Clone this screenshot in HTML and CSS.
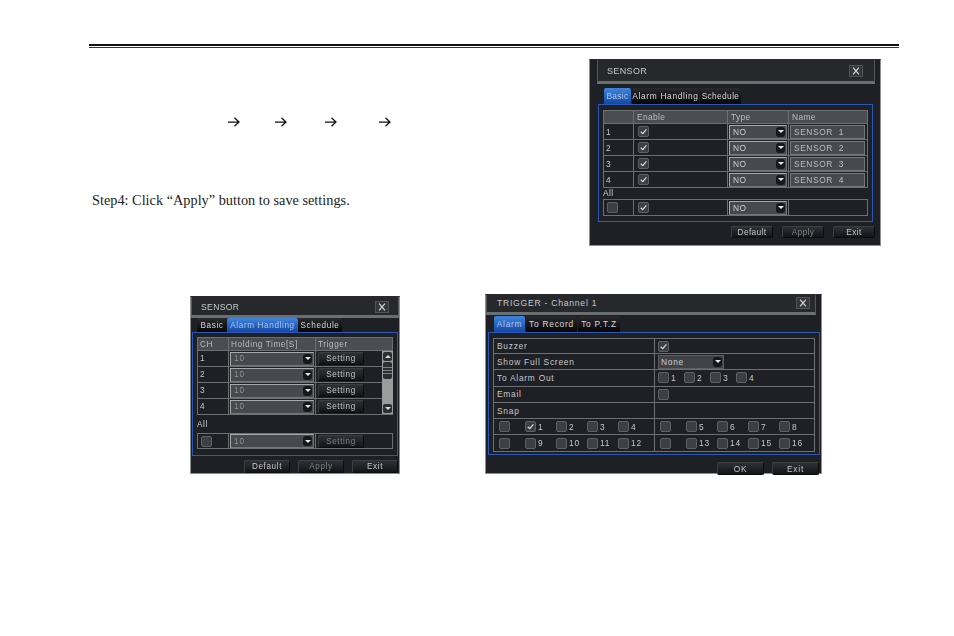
FILE: index.html
```html
<!DOCTYPE html>
<html lang="en">
<head>
<meta charset="utf-8">
<title>Sensor setup</title>
<link rel="stylesheet" href="styles.css">
</head>
<body>
<svg class="defs" width="0" height="0" aria-hidden="true">
  <symbol id="tick" viewBox="0 0 10 10"><path d="M2 5.2 4.2 7.4 8.2 2.6" fill="none" stroke="#d6d8d8" stroke-width="1.4"/></symbol>
  <symbol id="cross" viewBox="0 0 14 12"><path d="M3.5 2 10.5 10M10.5 2 3.5 10" fill="none" stroke="#d0d0d0" stroke-width="1.6"/></symbol>
  <symbol id="arrow" viewBox="0 0 12 10"><path d="M0 5H11M6.5 .8 11 5 6.5 9.2" fill="none" stroke="#111" stroke-width="1.25"/></symbol>
</svg>
<main class="page">
  <div class="rule"></div>
  <div class="top">
    <div class="copy">
      <div class="arrows">
        <svg class="arrow"><use href="#arrow"/></svg>
        <svg class="arrow"><use href="#arrow"/></svg>
        <svg class="arrow"><use href="#arrow"/></svg>
        <svg class="arrow"><use href="#arrow"/></svg>
      </div>
      <p class="step">Step4: Click “Apply” button to save settings.</p>
    </div>

    <section class="win win-a">
      <header class="title"><span>SENSOR</span><span class="close"><svg><use href="#cross"/></svg></span></header>
      <nav class="tabs"><span class="tab on">Basic</span><span class="tab">Alarm Handling</span><span class="tab">Schedule</span></nav>
      <div class="panel">
        <div class="row head"><span>&nbsp;</span><span>Enable</span><span>Type</span><span>Name</span></div>
        <div class="row"><span>1</span><span><i class="cb"><svg><use href="#tick"/></svg></i></span><span><b class="sel">NO<em></em></b></span><span><b class="inp">SENSOR&nbsp; 1</b></span></div>
        <div class="row"><span>2</span><span><i class="cb"><svg><use href="#tick"/></svg></i></span><span><b class="sel">NO<em></em></b></span><span><b class="inp">SENSOR&nbsp; 2</b></span></div>
        <div class="row"><span>3</span><span><i class="cb"><svg><use href="#tick"/></svg></i></span><span><b class="sel">NO<em></em></b></span><span><b class="inp">SENSOR&nbsp; 3</b></span></div>
        <div class="row"><span>4</span><span><i class="cb"><svg><use href="#tick"/></svg></i></span><span><b class="sel">NO<em></em></b></span><span><b class="inp">SENSOR&nbsp; 4</b></span></div>
        <div class="all-label">All</div>
        <div class="row all"><span><i class="cb"></i></span><span><i class="cb"><svg><use href="#tick"/></svg></i></span><span><b class="sel">NO<em></em></b></span><span></span></div>
      </div>
      <footer class="actions"><span class="btn">Default</span><span class="btn dim">Apply</span><span class="btn">Exit</span></footer>
    </section>
  </div>

  <div class="bottom">
    <section class="win win-b">
      <header class="title"><span>SENSOR</span><span class="close"><svg><use href="#cross"/></svg></span></header>
      <nav class="tabs"><span class="tab">Basic</span><span class="tab on">Alarm Handling</span><span class="tab">Schedule</span></nav>
      <div class="panel">
        <div class="scrollwrap">
          <div class="row head"><span>CH</span><span>Holding Time[S]</span><span>Trigger</span></div>
          <div class="row"><span>1</span><span><b class="sel mute">10<em></em></b></span><span><span class="btn">Setting</span></span></div>
          <div class="row"><span>2</span><span><b class="sel mute">10<em></em></b></span><span><span class="btn">Setting</span></span></div>
          <div class="row"><span>3</span><span><b class="sel mute">10<em></em></b></span><span><span class="btn">Setting</span></span></div>
          <div class="row"><span>4</span><span><b class="sel mute">10<em></em></b></span><span><span class="btn">Setting</span></span></div>
          <div class="scrollbar"><i class="sb-btn up"></i><i class="sb-thumb"></i><i class="sb-fill"></i><i class="sb-btn down"></i></div>
        </div>
        <div class="all-label">All</div>
        <div class="row all"><span><i class="cb"></i></span><span><b class="sel mute">10<em></em></b></span><span><span class="btn dim">Setting</span></span></div>
      </div>
      <footer class="actions"><span class="btn">Default</span><span class="btn dim">Apply</span><span class="btn">Exit</span></footer>
    </section>

    <section class="win win-c">
      <header class="title"><span>TRIGGER - Channel 1</span><span class="close"><svg><use href="#cross"/></svg></span></header>
      <nav class="tabs"><span class="tab on">Alarm</span><span class="tab">To Record</span><span class="tab">To P.T.Z</span></nav>
      <div class="panel">
        <div class="row"><span>Buzzer</span><span><i class="cb"><svg><use href="#tick"/></svg></i></span></div>
        <div class="row"><span>Show Full Screen</span><span><b class="sel none">None<em></em></b></span></div>
        <div class="row"><span>To Alarm Out</span><span class="outs"><label><i class="cb"></i>1</label><label><i class="cb"></i>2</label><label><i class="cb"></i>3</label><label><i class="cb"></i>4</label></span></div>
        <div class="row"><span>Email</span><span><i class="cb"></i></span></div>
        <div class="row"><span>Snap</span><span></span></div>
        <div class="row"><span class="snap"><label><i class="cb"></i></label><label><i class="cb"><svg><use href="#tick"/></svg></i>1</label><label><i class="cb"></i>2</label><label><i class="cb"></i>3</label><label><i class="cb"></i>4</label></span><span class="snap"><label><i class="cb"></i></label><label><i class="cb"></i>5</label><label><i class="cb"></i>6</label><label><i class="cb"></i>7</label><label><i class="cb"></i>8</label></span></div>
        <div class="row"><span class="snap"><label><i class="cb"></i></label><label><i class="cb"></i>9</label><label><i class="cb"></i>10</label><label><i class="cb"></i>11</label><label><i class="cb"></i>12</label></span><span class="snap"><label><i class="cb"></i></label><label><i class="cb"></i>13</label><label><i class="cb"></i>14</label><label><i class="cb"></i>15</label><label><i class="cb"></i>16</label></span></div>
      </div>
      <footer class="actions"><span class="btn">OK</span><span class="btn">Exit</span></footer>
    </section>
  </div>
</main>
</body>
</html>
```
FILE: styles.css
```css
* { box-sizing: border-box; }
html, body { margin: 0; background: #fff; }
.defs { display: block; height: 0; }
.page { width: 954px; height: 636px; overflow: hidden; padding-top: 44px; }
.rule { height: 4px; margin: 0 55px 0 89px; border-top: 2px solid #111; border-bottom: 1px solid #333; }

.top { display: flex; height: 246px; padding-top: 11px; }
.copy { width: 589px; padding-left: 92px; }
.arrows { display: flex; padding: 58px 0 0 136px; }
.arrow { width: 12px; height: 10px; display: block; }
.arrow:nth-child(2) { margin-left: 35px; }
.arrow:nth-child(3) { margin-left: 38px; }
.arrow:nth-child(4) { margin-left: 42px; }
.step { margin: 65px 0 0; font: 14.3px/16px "Liberation Serif", serif; color: #222; white-space: nowrap; }

.bottom { display: flex; align-items: flex-start; padding-left: 190px; }

/* Dialog shell */
.win { display: flex; flex-direction: column; background: #1f1f26; border: 1px solid #8b8f8e; border-top-color: #2a2a2e;
  font-family: "Liberation Sans", sans-serif; color: #c6c8c8; filter: blur(.45px); }
.title { display: flex; justify-content: space-between; align-items: center; background: #27282c;
  border: 1px solid #55585a; border-top: 0; border-bottom: 3px solid #6a6f72; flex: none; }
.close { display: flex; align-items: center; justify-content: center; background: #35363a; border: 1px solid #505255; }
.close svg { width: 100%; height: 100%; display: block; }
.tabs { display: flex; align-items: flex-end; gap: 1px; flex: none; }
.tab { display: flex; align-items: center; justify-content: center; background: linear-gradient(#2a2a2e, #060608);
  border-radius: 2px 2px 0 0; color: #d8d8d8; white-space: nowrap; }
.tab.on { background: linear-gradient(#3f86dd, #1446a6); color: #a9c6e6; }
.panel { border: 1px solid #2a58b4; flex: none; }
.row { display: grid; border: 1px solid #6c7072; border-top: 0; background: #1f1f26; }
.row > span { display: flex; align-items: center; border-left: 1px solid #6c7072; min-width: 0; }
.row > span:first-child { border-left: 0; }
.head { background: #4a4e53; border-top: 1px solid #6c7072; color: #bcbebe; }
.all-label { color: #d0d0d0; }
.all { border-top: 1px solid #6c7072; }

/* Controls */
.cb { display: flex; flex: none; align-items: center; justify-content: center; background: #3c3f44; border: 1px solid #5e6164; border-radius: 2px; }
.cb svg { width: 100%; height: 100%; display: block; }
.sel { display: flex; align-items: center; justify-content: space-between; font-weight: 400; background: #464a4f;
  border: 1px solid #72767a; border-top-color: #a8aaaa; border-left-color: #a8aaaa; color: #ccced0; }
.sel em { display: flex; align-items: center; justify-content: center; align-self: stretch; background: #16181b; border-radius: 3px; margin: 1px; }
.sel em::after { content: ""; border: 3px solid transparent; border-top: 3px solid #e8e8e8; border-bottom: 0; }
.sel.mute { color: #8f9396; }
.inp { display: flex; align-items: center; font-weight: 400; background: #464a4f; border: 1px solid #74787c; color: #bcbfc0; }
.btn { display: flex; align-items: center; justify-content: center; background: linear-gradient(#303136, #131418);
  border: 1px solid #3c3d40; border-right-color: #0c0c0e; border-bottom-color: #0c0c0e; border-radius: 2px; color: #c4c5c5; }
.btn.dim { color: #7d7f82; }
.actions { display: flex; justify-content: flex-end; flex: none; }

/* Window A: Basic */
.win-a { width: 292px; height: 187px; font-size: 8.4px; letter-spacing: .35px; }
.win-a .title { height: 24px; margin: 0 5px 0 7px; padding: 0 11px 0 9px; font-size: 9px; }
.win-a .close { width: 14px; height: 12px; }
.win-a .tabs { height: 20px; padding-left: 14px; }
.win-a .tab { height: 16px; width: 27px; }
.win-a .tab + .tab { width: 67px; letter-spacing: .65px; }
.win-a .tab:last-child { width: 41px; letter-spacing: .35px; }
.win-a .panel { height: 118px; margin: 0 7px 0 8px; padding: 5px 4px 0; }
.win-a .row { grid-template-columns: 29px 94px 61px 1fr; height: 16px; }
.win-a .head { height: 14px; }
.win-a .row > span:first-child { padding-left: 2px; }
.win-a .row > span:nth-child(2) { padding-left: 4px; }
.win-a .row > span:nth-child(n+3) { padding: 0 1px; }
.win-a .head > span:nth-child(n+2) { padding-left: 3px; }
.win-a .cb { width: 11px; height: 11px; }
.win-a .sel { flex: 1; height: 14px; padding: 0 0 0 3px; }
.win-a .sel em { width: 9px; }
.win-a .inp { flex: 1; height: 14px; padding-left: 3px; margin-right: 1px; letter-spacing: .6px; }
.win-a .all-label { height: 11px; line-height: 10px; }
.win-a .all { height: 17px; }
.win-a .all > span:first-child .cb { margin-left: 1px; }
.win-a .actions { gap: 9px; padding: 4px 5px 0 0; }
.win-a .btn { width: 42px; height: 12px; }

/* Window B: Alarm Handling */
.win-b { width: 210px; height: 178px; margin-top: 2px; font-size: 8.2px; letter-spacing: .6px; }
.win-b .title { height: 21px; padding: 2px 9px 0 9px; font-size: 8.6px; letter-spacing: .35px; }
.win-b .close { width: 14px; height: 12px; }
.win-b .tabs { height: 14px; padding-left: 6px; gap: 0; }
.win-b .tab { height: 14px; width: 30px; }
.win-b .tab + .tab { width: 71px; }
.win-b .tab:last-child { width: 44px; }
.win-b .panel { height: 124px; margin: 0 1px; padding: 4px 4px 0; }
.win-b .scrollwrap { display: grid; grid-template-columns: 1fr 11px; grid-template-rows: 14px repeat(4, 16px); }
.win-b .row { grid-column: 1 / -1; grid-template-columns: 30px 87px 1fr; }
.win-b .scrollwrap .row:nth-child(1) { grid-row: 1; }
.win-b .scrollwrap .row:nth-child(2) { grid-row: 2; }
.win-b .scrollwrap .row:nth-child(3) { grid-row: 3; }
.win-b .scrollwrap .row:nth-child(4) { grid-row: 4; }
.win-b .scrollwrap .row:nth-child(5) { grid-row: 5; }
.win-b .row > span:first-child { padding-left: 2px; }
.win-b .row > span:nth-child(2) { padding: 0 1px; }
.win-b .row > span:nth-child(3) { padding-left: 2px; }
.win-b .head > span:nth-child(n+2) { padding-left: 2px; }
.win-b .sel { flex: 1; height: 14px; padding-left: 3px; letter-spacing: 1px; }
.win-b .sel em { width: 9px; }
.win-b .row .btn { width: 46px; height: 13px; }
.win-b .scrollbar { grid-column: 2; grid-row: 2 / 6; z-index: 1; display: flex; flex-direction: column; background: #9a9d9c; height: 63px; padding: 1px; }
.sb-btn { display: flex; flex: none; align-items: center; justify-content: center; height: 9px; background: #2c2e31; border-radius: 2px; }
.sb-btn.up::after { content: ""; border: 3px solid transparent; border-bottom-color: #ddd; border-top: 0; }
.sb-btn.down::after { content: ""; border: 3px solid transparent; border-top-color: #ddd; border-bottom: 0; }
.sb-thumb { flex: none; height: 17px; margin-top: 1px; background: linear-gradient(#2c2e31 0 5px, #7f8284 5px 6px, #2c2e31 6px 8px, #7f8284 8px 9px, #2c2e31 9px 11px, #7f8284 11px 12px, #2c2e31 12px); border-radius: 2px; }
.sb-fill { flex: 1; }
.win-b .all-label { height: 18px; line-height: 20px; }
.win-b .all { height: 16px; }
.win-b .all .cb { width: 11px; height: 11px; margin-left: 1px; }
.win-b .actions { gap: 8px; padding: 4px 1px 0 0; }
.win-b .actions .btn { width: 46px; height: 13px; }

/* Window C: Trigger */
.win-c { width: 337px; height: 180px; margin-left: 85px; font-size: 8.4px; letter-spacing: .75px; }
.win-c .title { height: 20px; margin: 0 5px 0 0; padding: 0 5px 1px 10px; font-size: 8.6px; }
.win-c .close { width: 14px; height: 12px; }
.win-c .tabs { height: 17px; padding-left: 8px; gap: 1px; }
.win-c .tab { height: 16px; width: 31px; }
.win-c .tab + .tab { width: 51px; }
.win-c .tab:last-child { width: 42px; }
.win-c .panel { height: 123px; margin: 0 1px 0 2px; padding: 5px 4px 0; }
.win-c .row { grid-template-columns: 160px 1fr; height: 16.3px; }
.win-c .row:first-child { border-top: 1px solid #6c7072; height: 16px; }
.win-c .row > span { padding-left: 3px; }
.win-c .cb { width: 11px; height: 11px; }
.win-c label { display: flex; align-items: center; gap: 2px; }
.outs { gap: 6px; }
.outs label { width: 20px; }
.win-c .row > .snap { display: grid; grid-template-columns: 26px repeat(4, 31px); padding-left: 5px; }
.win-c .sel.none { width: 66px; height: 14px; flex: none; padding-left: 2px; background: #3f4348; border-color: #5c5f62; }
.win-c .sel em { width: 9px; }
.win-c .actions { gap: 8px; padding: 7px 2px 0 0; }
.win-c .btn { width: 47px; height: 13px; }
```
